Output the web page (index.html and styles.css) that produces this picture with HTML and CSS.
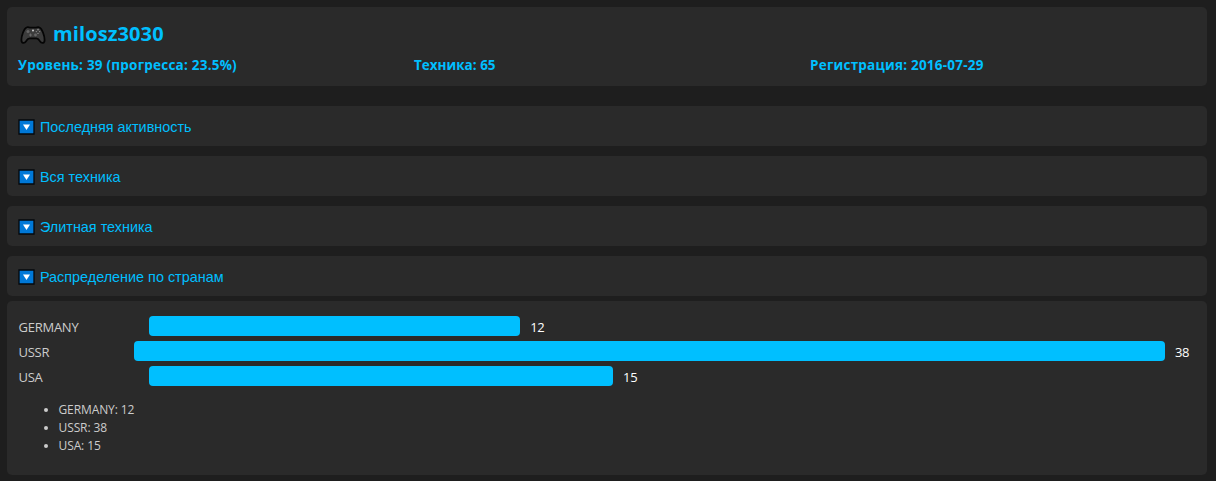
FILE: index.html
```html
<!DOCTYPE html>
<html lang="ru">
<head>
    <meta charset="UTF-8">
    <meta name="viewport" content="width=device-width, initial-scale=1.0">
    <title>milosz3030</title>
    <link rel="stylesheet" href="styles.css">
</head>
<body>
    <div class="header">
        <h1>
            <svg class="gamepad" viewBox="0 0 26 20">
                <path d="M6.500 2.500C8 1.700 9 2.600 10.500 2.600h5C17 2.600 18 1.700 19.500 2.500 22 3.600 24.600 10.500 24.600 15c0 3.600-3 3.700-4.700 1.200-1.200-1.900-1.800-2.900-3.500-2.900h-6.800c-1.700 0-2.300 1-3.500 2.900C4.400 18.700 1.400 18.600 1.400 15 1.400 10.500 4 3.600 6.500 2.500z" fill="#3c3c3c" stroke="#050505" stroke-width="1.8"/>
                <circle cx="8" cy="6.500" r="1.500" fill="#666"/>
                <circle cx="15.500" cy="10" r="1.400" fill="#666"/>
                <path d="M9 10h3M10.500 8.500v3" stroke="#696969"/>
                <circle cx="13" cy="5.500" r=".9" fill="#ddd"/>
                <circle cx="18" cy="4.800" r=".7" fill="#aaa"/>
                <circle cx="16.300" cy="6.600" r=".6" fill="#999"/>
                <circle cx="19.700" cy="6.600" r=".6" fill="#999"/>
                <circle cx="18" cy="8.400" r=".6" fill="#999"/>
            </svg>
            <span>milosz3030</span>
        </h1>
        <div class="stats">
            <div>Уровень: 39 (прогресса: 23.5%)</div>
            <div class="stat-vehicles">Техника: 65</div>
            <div>Регистрация: 2016-07-29</div>
        </div>
    </div>

    <button class="toggle">
        <svg class="arrow" viewBox="0 0 17 16"><path class="arrow-box" d="M1 1h15v14H1z"/><path class="arrow-mark" d="M5 5.500h7L8.500 11z"/></svg>
        <span>Последняя активность</span>
    </button>
    <button class="toggle">
        <svg class="arrow" viewBox="0 0 17 16"><path class="arrow-box" d="M1 1h15v14H1z"/><path class="arrow-mark" d="M5 5.500h7L8.500 11z"/></svg>
        <span>Вся техника</span>
    </button>
    <button class="toggle">
        <svg class="arrow" viewBox="0 0 17 16"><path class="arrow-box" d="M1 1h15v14H1z"/><path class="arrow-mark" d="M5 5.500h7L8.500 11z"/></svg>
        <span>Элитная техника</span>
    </button>
    <button class="toggle">
        <svg class="arrow" viewBox="0 0 17 16"><path class="arrow-box" d="M1 1h15v14H1z"/><path class="arrow-mark" d="M5 5.500h7L8.500 11z"/></svg>
        <span>Распределение по странам</span>
    </button>

    <div class="content">
        <div class="bar-row">
            <div class="bar-label">GERMANY</div>
            <div class="bar" style="width: 31.58%"></div>
            <div class="bar-value">12</div>
        </div>
        <div class="bar-row">
            <div class="bar-label">USSR</div>
            <div class="bar" style="width: 100%"></div>
            <div class="bar-value">38</div>
        </div>
        <div class="bar-row">
            <div class="bar-label">USA</div>
            <div class="bar" style="width: 39.47%"></div>
            <div class="bar-value">15</div>
        </div>
        <ul class="countries">
            <li>GERMANY: 12</li>
            <li>USSR: 38</li>
            <li>USA: 15</li>
        </ul>
    </div>
</body>
</html>
```
FILE: styles.css
```css
* {
    box-sizing: border-box;
}
body {
    margin: 0;
    padding: 7px 9px 0 7px;
    height: 481px;
    overflow: hidden;
    background-color: #1e1e1e;
    color: #ccc;
    font-family: "Segoe UI", "Open Sans", "Noto Sans", sans-serif;
}
.header {
    height: 79px;
    margin-bottom: 20px;
    padding: 12px 0 0 11px;
    background-color: #2a2a2a;
    border-radius: 5px;
    color: #00bfff;
}
h1 {
    display: flex;
    align-items: center;
    height: 30px;
    margin: 0;
    font-size: 20px;
    line-height: 30px;
    letter-spacing: 0.1px;
}
.gamepad {
    width: 26px;
    height: 20px;
    margin: 1px 7px 0 2px;
}
.stats {
    display: grid;
    grid-template-columns: repeat(3, 396px);
    margin-top: 6px;
    font-size: 13.5px;
    font-weight: bold;
    line-height: 20px;
    letter-spacing: 0.22px;
}
.stat-vehicles {
    letter-spacing: 0;
}
.toggle {
    display: flex;
    align-items: center;
    width: 100%;
    height: 40px;
    margin: 0 0 10px;
    padding: 2px 11px 0;
    background-color: #2a2a2a;
    border: none;
    border-radius: 5px;
    color: #00bfff;
    font-family: Arial, "Liberation Sans", sans-serif;
    font-size: 14.4px;
    cursor: pointer;
}
.arrow {
    width: 17px;
    height: 16px;
    margin-right: 5px;
}
.arrow-box {
    fill: #0078d7;
    stroke: #04080d;
    stroke-width: 1.3;
}
.arrow-mark {
    fill: #fff;
}
.content {
    height: 174px;
    margin-top: -5px;
    padding: 15px 11.5px 0;
    background-color: #2a2a2a;
    border-radius: 5px;
}
.bar-row {
    display: flex;
    height: 20px;
    margin-bottom: 5px;
    font-size: 13px;
    line-height: 23px;
}
.bar-label {
    width: 120px;
    margin-right: 10px;
    letter-spacing: -0.25px;
}
.bar {
    height: 20px;
    background-color: #00bfff;
    border-radius: 4px;
}
.bar-value {
    width: 23.5px;
    margin-left: 10px;
    color: #fff;
    letter-spacing: -0.3px;
}
.countries {
    margin: 15px 0 0;
    padding-left: 40px;
    font-size: 12px;
    line-height: 18px;
    letter-spacing: -0.1px;
}
```
